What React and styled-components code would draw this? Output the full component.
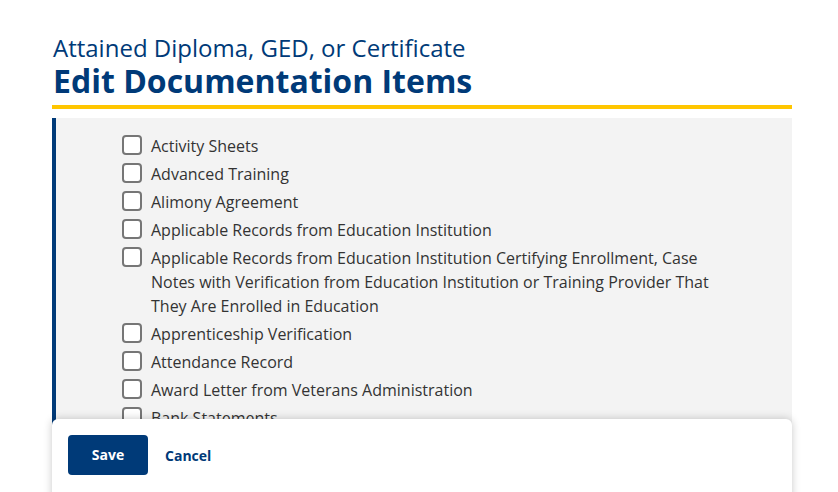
import React from 'react';
import styled, { createGlobalStyle } from 'styled-components';

const GlobalStyle = createGlobalStyle`
  * { box-sizing: border-box; }
  html, body { margin: 0; padding: 0; background: #fff; }
  body { font-family: "Open Sans", "Liberation Sans", sans-serif; overflow: hidden; }
`;

const items = [
  'Activity Sheets',
  'Advanced Training',
  'Alimony Agreement',
  'Applicable Records from Education Institution',
  'Applicable Records from Education Institution Certifying Enrollment, Case Notes with Verification from Education Institution or Training Provider That They Are Enrolled in Education',
  'Apprenticeship Verification',
  'Attendance Record',
  'Award Letter from Veterans Administration',
  'Bank Statements',
  'Birth Certificate',
  'Certificate of Completion',
];

const Page = styled.div`
  position: relative;
  height: 100vh;
  overflow: hidden;
  padding: 32px 46px 0 52px;
`;

const Header = styled.header`
  border-bottom: 4px solid #ffc600;
  padding-bottom: 7px;
`;

const Subtitle = styled.div`
  font-size: 24px;
  line-height: 32px;
  color: #003a78;
  padding-left: 1px;
`;

const Title = styled.h1`
  margin: 0;
  font-size: 32px;
  line-height: 34px;
  font-weight: 700;
  color: #003a78;
  padding-left: 1px;
`;

const Panel = styled.div`
  margin-top: 9px;
  background: #f3f3f3;
  border-left: 4px solid #003a78;
  padding: 16px 0 0 66px;
  height: 420px;
`;

const List = styled.ul`
  list-style: none;
  margin: 0;
  padding: 0;
  width: 600px;
  display: flex;
  flex-direction: column;
  gap: 4px;
`;

const Item = styled.li`
  display: flex;
  align-items: flex-start;
  gap: 9px;
  font-size: 16px;
  line-height: 24px;
  color: #333;
`;

const Box = styled.span`
  flex: none;
  width: 20px;
  height: 20px;
  margin-top: 1px;
  border: 2px solid #767676;
  border-radius: 4px;
  background: #fff;
`;

const Footer = styled.footer`
  position: absolute;
  left: 52px;
  bottom: -10px;
  width: 740px;
  height: 83px;
  background: #fff;
  border-radius: 6px 6px 0 0;
  box-shadow: 0 0 8px rgba(0, 0, 0, 0.22);
  padding: 16px 16px;
  display: flex;
  align-items: flex-start;
  gap: 17px;
`;

const SaveButton = styled.button`
  width: 80px;
  height: 40px;
  padding: 0 0 2px;
  border: none;
  border-radius: 4px;
  background: #003a78;
  color: #fff;
  font-family: inherit;
  font-size: 14px;
  font-weight: 700;
`;

const CancelButton = styled.button`
  height: 40px;
  border: none;
  background: none;
  padding: 0;
  color: #003a78;
  font-family: inherit;
  font-size: 14px;
  font-weight: 700;
`;

export default function App() {
  return (
    <>
      <GlobalStyle />
      <Page>
        <Header>
          <Subtitle>Attained Diploma, GED, or Certificate</Subtitle>
          <Title>Edit Documentation Items</Title>
        </Header>
        <Panel>
          <List>
            {items.map((label) => (
              <Item key={label}>
                <Box />
                <span>{label}</span>
              </Item>
            ))}
          </List>
        </Panel>
        <Footer>
          <SaveButton>Save</SaveButton>
          <CancelButton>Cancel</CancelButton>
        </Footer>
      </Page>
    </>
  );
}
